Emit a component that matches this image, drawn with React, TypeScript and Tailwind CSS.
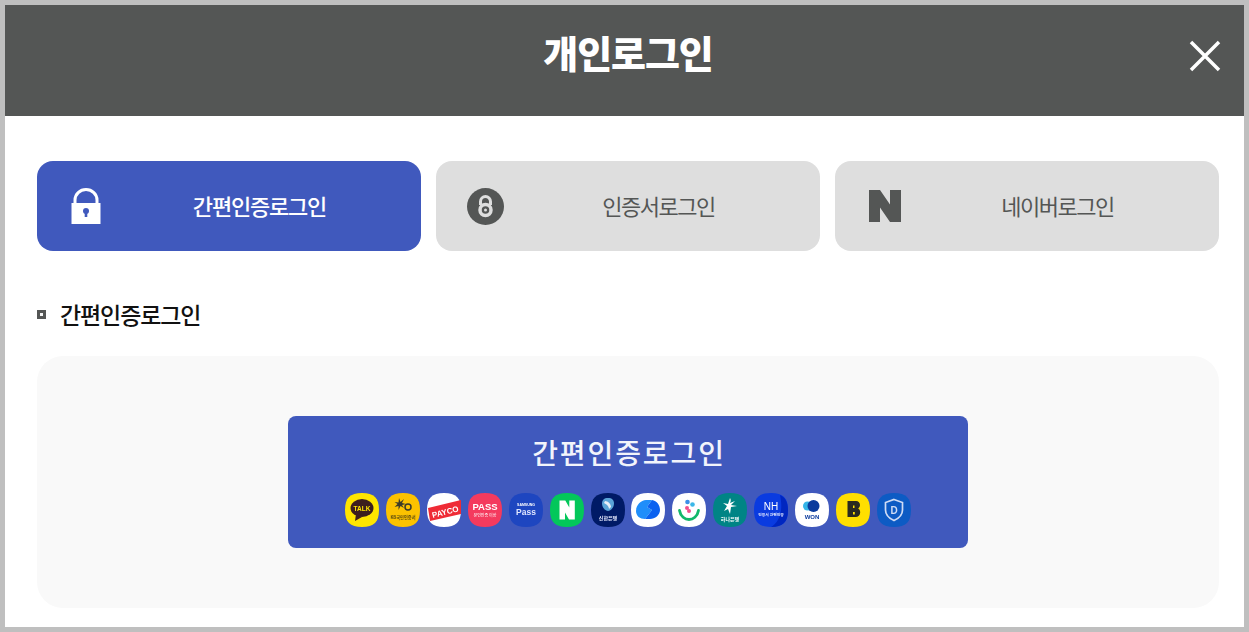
import React from "react";

const latin = "font-['Liberation_Sans',sans-serif]";

function Squircle({ fill, children }: { fill: string; children?: React.ReactNode }) {
  return (
    <svg width="34" height="34" viewBox="0 0 34 34" className="shrink-0 blur-[0.4px]">
      <path d="M17 0C29 0 34 5 34 17S29 34 17 34 0 29 0 17 5 0 17 0Z" fill={fill} />
      {children}
    </svg>
  );
}

const icons: React.ReactNode[] = [
  <Squircle fill="#fee500" key="kakao">
    <ellipse cx="17" cy="15" rx="11.500" ry="9" fill="#3c1e1e" />
    <path d="M11 21l-1 7 7-4z" fill="#3c1e1e" />
    <text x="17" y="17.500" textAnchor="middle" fontSize="6.500" fontWeight="700" fill="#fee500" className={latin}>TALK</text>
  </Squircle>,
  <Squircle fill="#fcc200" key="kb">
    <path d="M13 5l1.500 4 3.500-3-2 4 4 1-4 1 2 3-3.500-2-2 4v-4l-4 1 3-3-3-2 4 .5z" fill="#3a3a2a" />
    <circle cx="22" cy="14" r="3" fill="none" stroke="#3a3a2a" strokeWidth="1.500" />
    <text x="17" y="26" textAnchor="middle" fontSize="4.200" fontWeight="700" fill="#5a4a10">KB국민인증서</text>
  </Squircle>,
  <Squircle fill="#ffffff" key="payco">
    <path d="M1 15L34 7V21L3 28Z" fill="#ef2b36" />
    <text x="18" y="22" textAnchor="middle" fontSize="8" fontWeight="700" fill="#fff" transform="rotate(-14 17 18)" className={latin}>PAYCO</text>
  </Squircle>,
  <Squircle fill="#f43a5e" key="pass">
    <text x="17" y="17" textAnchor="middle" fontSize="9.500" fontWeight="700" fill="#fff" className={latin}>PASS</text>
    <text x="17" y="24" textAnchor="middle" fontSize="4" fill="#fff">본인인증 이상</text>
  </Squircle>,
  <Squircle fill="#1e46c0" key="sspass">
    <text x="17" y="12.500" textAnchor="middle" fontSize="3.500" fontWeight="700" fill="#fff" className={latin}>SAMSUNG</text>
    <text x="17" y="21.500" textAnchor="middle" fontSize="8.500" fontWeight="700" fill="#dfe6ff" className={latin}>Pass</text>
  </Squircle>,
  <Squircle fill="#03c75a" key="naver">
    <path d="M9.500 7.500h5.800l4 7V7.500h5.500v19h-5.800l-4-7v7H9.500z" fill="#fff" />
  </Squircle>,
  <Squircle fill="#001a66" key="shinhan">
    <path d="M17 5c4 0 6 2 6 5.500S20 18 17 18s-6-4-6-7.500S13 5 17 5z" fill="#5aa4d8" />
    <path d="M14 8c3 0 6 3 6 6l-2 2c0-3-3-5-5-6z" fill="#e8eef8" />
    <text x="17" y="26.500" textAnchor="middle" fontSize="5" fontWeight="700" fill="#e8ecff">신한은행</text>
  </Squircle>,
  <Squircle fill="#ffffff" key="toss">
    <path d="M5 18c0-6 5-11 10-11h6l-5 7 5 3-7 9c-5 0-9-3-9-8z" fill="#1f8efa" />
    <path d="M14 26l7-9-5-3 5-7c5 1 8 5 8 10 0 5-5 9-10 9z" fill="#0a62f0" />
  </Squircle>,
  <Squircle fill="#ffffff" key="kica">
    <circle cx="15.500" cy="9" r="2.300" fill="#3b8fe8" />
    <circle cx="20.500" cy="11.500" r="2.300" fill="#3bb7e8" />
    <circle cx="15" cy="15" r="2" fill="#f24f8c" />
    <path d="M7.500 17.500c1 6 5.500 9 9.500 9s8.500-3 9.500-9" fill="none" stroke="#12b76a" strokeWidth="2.800" strokeLinecap="round" />
    <circle cx="17" cy="18" r="2" fill="#f24f8c" />
  </Squircle>,
  <Squircle fill="#008485" key="hana">
    <path d="M17 5c1 2 1 3 0 5l5-2-4 4 6 1-6 1-1 7-2-5-4 2 3-5-4-3 5 1z" fill="#fff" />
    <text x="17" y="27.500" textAnchor="middle" fontSize="5" fontWeight="700" fill="#fff">하나은행</text>
  </Squircle>,
  <Squircle fill="#0a3be0" key="nh">
    <path d="M34 17C34 29 29 34 17 34 24 30 30 20 26 2 31 4 34 9 34 17Z" fill="#0026c0" />
    <text x="17" y="16.500" textAnchor="middle" fontSize="10" fontWeight="400" fill="#fff" className={latin}>NH</text>
    <text x="17" y="23" textAnchor="middle" fontSize="3.800" fontWeight="700" fill="#dfe6ff">인증서 간편인증</text>
  </Squircle>,
  <Squircle fill="#ffffff" key="woori">
    <circle cx="12.500" cy="13" r="4.500" fill="#35b5e8" />
    <circle cx="18.500" cy="13" r="6" fill="#0a3a9c" />
    <text x="17" y="26" textAnchor="middle" fontSize="6" fontWeight="700" fill="#0a3a9c" className={latin}>WON</text>
  </Squircle>,
  <Squircle fill="#ffdf00" key="bank">
    <path d="M11.500 8h8.500c2.500 0 4 1.700 4 4 0 1.500-.7 2.700-1.800 3.500 1.300.8 2 2.200 2 3.800 0 3-2 4.700-4.700 4.700h-8zm5.500 4.500v2.500h1.500v-2.500zm0 6.500v2.500h1.800v-2.500z" fill="#2a2a20" fillRule="evenodd" />
  </Squircle>,
  <Squircle fill="#0d5bc4" key="d">
    <path d="M17 6.500l8.500 3v7.500c0 5-4 8.500-8.500 10.500-4.500-2-8.500-5.500-8.500-10.500V9.500z" fill="none" stroke="#cfdcf5" strokeWidth="1.700" />
    <text x="17" y="21" textAnchor="middle" fontSize="10" fontWeight="700" fill="#cfdcf5" className={latin}>D</text>
  </Squircle>,
];

function LockIcon() {
  return (
    <svg width="30" height="36" viewBox="0 0 30 36" className="-translate-x-px">
      <path d="M4 16V12a11 10.500 0 0 1 22 0v4" fill="none" stroke="#fff" strokeWidth="3" />
      <path d="M0.500 15h29v21h-29z" fill="#fff" />
      <circle cx="15" cy="23" r="3" fill="#4059bd" />
      <path d="M13.700 24h2.600v5h-2.600z" fill="#4059bd" />
    </svg>
  );
}

function CertIcon() {
  return (
    <svg width="37" height="37" viewBox="0 0 37 37">
      <circle cx="18.500" cy="18.500" r="18.500" fill="#545655" />
      <path d="M13.500 17v-3.500a5 5 0 0 1 10 0V17" fill="none" stroke="#dedede" strokeWidth="3" />
      <circle cx="18.500" cy="22" r="5.500" fill="#545655" stroke="#dedede" strokeWidth="3.500" />
      <circle cx="18.500" cy="22" r="1.500" fill="#dedede" />
    </svg>
  );
}

function NIcon() {
  return (
    <svg width="32" height="32" viewBox="0 0 32 32" className="blur-[0.4px]">
      <path d="M0 0h11l10 14.500V0h11v32H21L11 17.500V32H0z" fill="#545655" />
    </svg>
  );
}

function Tab({ active, icon, label }: { active?: boolean; icon: React.ReactNode; label: string }) {
  return (
    <div
      className={`flex h-[90px] flex-1 items-center rounded-[16px] ${active ? "bg-[#4059bd] font-medium tracking-[-1.200px] text-white" : "bg-[#dedede] tracking-[-1.500px] text-[#545655]"}`}
    >
      <div className="flex w-[99px] shrink-0 justify-center">{icon}</div>
      <div className="w-[247px] pb-[2px] text-center text-[22px] leading-none">{label}</div>
    </div>
  );
}

export default function App() {
  return (
    <div className="box-border flex h-[632px] w-[1249px] flex-col overflow-hidden border-[5px] border-[#bfbfbf] bg-white font-['Noto_Sans_CJK_KR','Noto_Sans',sans-serif]">
      <header className="relative flex h-[111px] shrink-0 items-center justify-center bg-[#545655] pb-[18px] pl-[7px]">
        <h1 className="text-[38px] font-black leading-none tracking-[-1.100px] text-white">개인로그인</h1>
        <svg width="34" height="34" viewBox="0 0 34 34" className="absolute right-[22px] top-[34px]">
          <path d="M3 3l28 28M31 3L3 31" stroke="#fff" strokeWidth="3.500" />
        </svg>
      </header>
      <main className="flex flex-1 flex-col pl-[32px] pr-[25px] pt-[45px]">
        <div className="flex gap-[15px]">
          <Tab active icon={<LockIcon />} label="간편인증로그인" />
          <Tab icon={<CertIcon />} label="인증서로그인" />
          <Tab icon={<NIcon />} label="네이버로그인" />
        </div>
        <div className="mt-[46px] flex h-[34px] items-center">
          <span className="box-border h-[9px] w-[9px] border-[3px] border-[#545655] bg-[#f5f5f5]" />
          <h2 className="ml-[14px] text-[23px] font-medium leading-none tracking-[-1.100px] text-[#111111]">간편인증로그인</h2>
        </div>
        <section className="mt-[25px] flex h-[252px] items-start justify-center rounded-[26px] bg-[#f9f9f9] pt-[60px]">
          <div className="flex h-[132px] w-[680px] flex-col items-center rounded-[8px] bg-[#4059bd] pt-[19px]">
            <div className="pl-[2px] text-[28px] font-medium leading-[34px] tracking-[1.900px] text-[#f2f4fb]">간편인증로그인</div>
            <div className="mt-[24px] flex gap-[6.900px]">{icons}</div>
          </div>
        </section>
      </main>
    </div>
  );
}
